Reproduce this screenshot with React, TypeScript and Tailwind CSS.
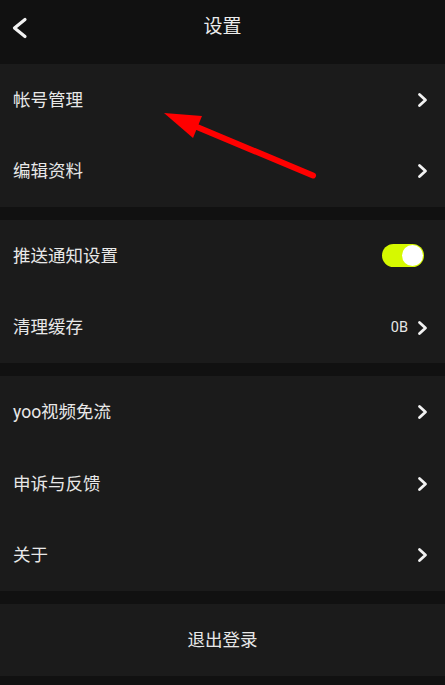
import React from "react";

const Chevron = () => (
  <svg width="12" height="16" viewBox="0 0 12 16" className="shrink-0">
    <path d="M2.5 2.5 L8.5 8 L2.5 13.5" fill="none" stroke="#f2f2f2" strokeWidth="2.8" strokeLinecap="round" strokeLinejoin="round" />
  </svg>
);

const Row = ({ label, right }: { label: string; right?: React.ReactNode }) => (
  <div className="flex h-[71.6px] items-center justify-between pl-[13px] pr-[16px]">
    <span className="text-[17.5px] text-[#e8e8e8]">{label}</span>
    {right ?? <Chevron />}
  </div>
);

export default function App() {
  return (
    <div
      className="relative h-[685px] w-[445px] overflow-hidden bg-[#111111]"
      style={{ fontFamily: 'Roboto, "Noto Sans CJK SC", "Noto Sans", sans-serif' }}
    >
      <div className="relative flex h-[64px] items-center justify-center pb-[10px]">
        <svg width="20" height="24" viewBox="0 0 20 24" className="absolute left-[9px] top-[16px]">
          <path d="M16 3.5 L5.5 12 L16 20.5" fill="none" stroke="#f2f2f2" strokeWidth="3.2" strokeLinecap="round" strokeLinejoin="round" />
        </svg>
        <span className="text-[19px] text-[#ececec]">设置</span>
      </div>

      <div className="bg-[#1b1b1b]">
        <Row label="帐号管理" />
        <Row label="编辑资料" />
      </div>

      <div className="mt-[13px] bg-[#1b1b1b]">
        <Row
          label="推送通知设置"
          right={
            <div className="mr-[5px] flex h-[23px] w-[42px] items-center justify-end rounded-full bg-[#d6f900] pr-[1px]">
              <div className="h-[21px] w-[21px] rounded-full bg-white" />
            </div>
          }
        />
        <Row
          label="清理缓存"
          right={
            <div className="flex items-center gap-[9px]">
              <span className="text-[14.5px] text-[#e6e6e6]">0B</span>
              <Chevron />
            </div>
          }
        />
      </div>

      <div className="mt-[13px] bg-[#1b1b1b]">
        <Row label="yoo视频免流" />
        <Row label="申诉与反馈" />
        <Row label="关于" />
      </div>

      <div className="mt-[13px] flex h-[72px] items-center justify-center bg-[#1b1b1b]">
        <span className="text-[17.5px] text-[#e8e8e8]">退出登录</span>
      </div>

      <svg width="445" height="685" className="pointer-events-none absolute left-0 top-0">
        <line x1="197" y1="127" x2="313" y2="175.5" stroke="#ff0000" strokeWidth="6" strokeLinecap="round" />
        <polygon points="164,113 202,116 193,138" fill="#ff0000" />
      </svg>
    </div>
  );
}
